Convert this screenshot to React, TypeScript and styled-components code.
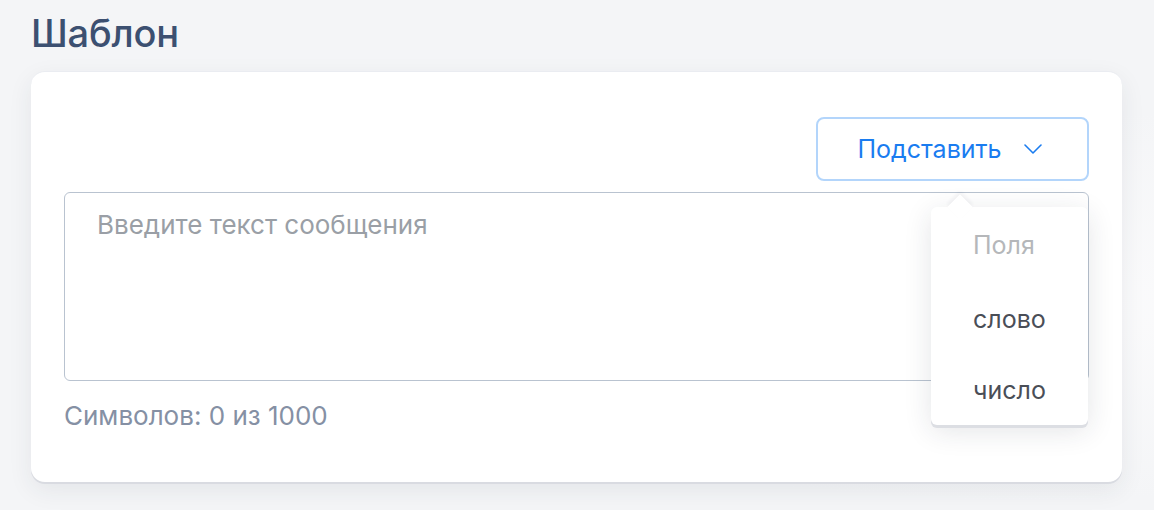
import React from 'react';
import styled, { createGlobalStyle } from 'styled-components';

const GlobalStyle = createGlobalStyle`
    html, body {
        margin: 0;
        padding: 0;
        background: #f4f5f7;
        font-family: Inter, "Noto Sans", "Liberation Sans", sans-serif;
    }
`;

const Page = styled.div`
    width: 1154px;
    height: 510px;
    box-sizing: border-box;
    padding: 10px 32px 0 31px;
    background: radial-gradient(ellipse at 90% 60%, #fbfbfc 0%, #f4f5f7 45%);
`;

const Title = styled.h1`
    margin: 0 0 15px;
    font-size: 38px;
    line-height: 46px;
    font-weight: 500;
    color: #3c5071;
    letter-spacing: -0.2px;
`;

const Card = styled.section`
    position: relative;
    box-sizing: border-box;
    height: 411px;
    padding: 45px 33px 0;
    background: #fff;
    border-radius: 14px;
    border-top: 1px solid #eaecf1;
    box-shadow: 0 2px 0 #d9dbe1, 0 8px 24px rgba(40, 50, 70, 0.08);
    display: flex;
    flex-direction: column;
`;

const Toolbar = styled.div`
    display: flex;
    justify-content: flex-end;
    margin-bottom: 11px;
`;

const DropWrap = styled.div`
    position: relative;
`;

const InsertButton = styled.button`
    box-sizing: border-box;
    width: 273px;
    height: 64px;
    display: flex;
    align-items: center;
    justify-content: center;
    gap: 22px;
    padding: 0 6px 0 0;
    background: #fff;
    border: 2px solid #b3d5fb;
    border-radius: 8px;
    color: #1a7cf0;
    font-family: inherit;
    font-size: 25px;
    font-weight: 400;
    cursor: pointer;
`;

const Menu = styled.ul`
    position: absolute;
    top: 90px;
    right: 1px;
    width: 157px;
    margin: 0;
    padding: 0;
    list-style: none;
    background: #fff;
    border-radius: 6px;
    box-shadow: 0 3px 0 #dcdee3, 0 6px 28px rgba(30, 40, 60, 0.12);
    z-index: 2;

    &::before {
        content: '';
        position: absolute;
        top: -9px;
        left: 20px;
        width: 18px;
        height: 18px;
        background: #fff;
        transform: rotate(45deg);
        box-shadow: -2px -2px 4px rgba(30, 40, 60, 0.06);
    }
`;

const MenuItem = styled.li<{ $muted?: boolean }>`
    position: relative;
    height: 72px;
    display: flex;
    align-items: center;
    padding-left: 42px;
    font-size: 25px;
    color: ${(p) => (p.$muted ? '#b5b7ba' : '#4a4e57')};
    &:first-child {
        height: 76px;
    }
    &:last-child {
        height: 70px;
    }
`;

const Field = styled.textarea`
    box-sizing: border-box;
    width: 100%;
    height: 189px;
    resize: none;
    padding: 16px 32px;
    border: 1.5px solid #b9c3d0;
    border-radius: 6px;
    font-family: inherit;
    font-size: 26px;
    line-height: 32px;
    color: #333;
    outline: none;
    &::placeholder {
        color: #9a9fa6;
    }
`;

const Counter = styled.div`
    margin-top: 19px;
    font-size: 26px;
    line-height: 32px;
    color: #8590a4;
`;

const Chevron = () => (
    <svg width="18" height="10" viewBox="0 0 18 10" fill="none">
        <path d="M1 1l8 8 8-8" stroke="#1a7cf0" strokeWidth="1.6" strokeLinecap="round" strokeLinejoin="round" />
    </svg>
);

const App = () => {
    return (
        <Page>
            <GlobalStyle />
            <Title>Шаблон</Title>
            <Card>
                <Toolbar>
                    <DropWrap>
                        <InsertButton>
                            Подставить
                            <Chevron />
                        </InsertButton>
                        <Menu>
                            <MenuItem $muted>Поля</MenuItem>
                            <MenuItem>слово</MenuItem>
                            <MenuItem>число</MenuItem>
                        </Menu>
                    </DropWrap>
                </Toolbar>
                <Field placeholder="Введите текст сообщения" />
                <Counter>Символов: 0 из 1000</Counter>
            </Card>
        </Page>
    );
};

export default App;
